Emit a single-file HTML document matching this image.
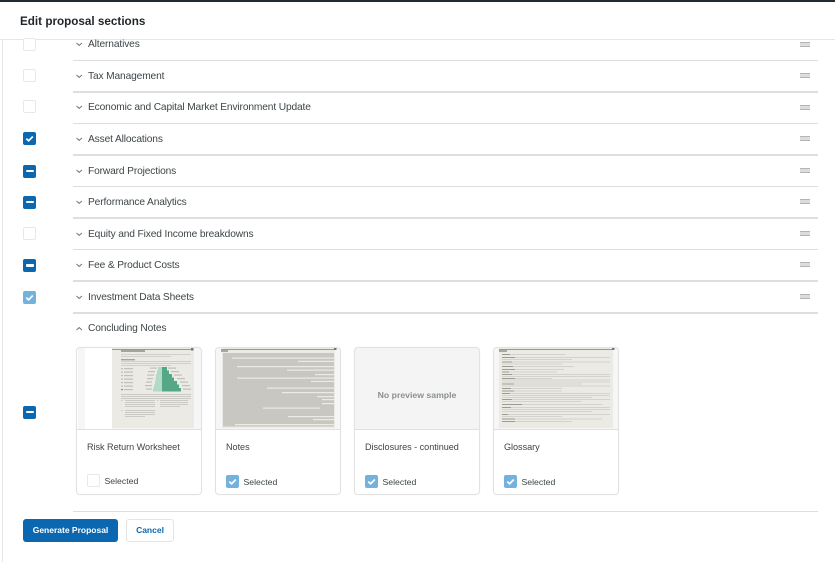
<!DOCTYPE html>
<html lang="en"><head><meta charset="utf-8"><title>Edit proposal sections</title>
<style>
html,body{margin:0;padding:0;background:#fff}
body{position:relative;width:835px;height:562px;overflow:hidden;font-family:"Liberation Sans",sans-serif;color:#3d4548;font-size:10.2px}
.a{position:absolute}
.t{position:absolute;left:88px;line-height:14px;white-space:nowrap;letter-spacing:-.13px}
.l{position:absolute;left:73px;width:745px;height:1.5px;background:#dedede}
.h{position:absolute;left:800px;width:10px;height:5px;border-top:1.5px solid #b4b4b4;border-bottom:1.5px solid #b4b4b4;box-sizing:border-box;background:#dcdcdc}
.c{position:absolute;left:23px;width:13px;height:13px;box-sizing:border-box;border-radius:2px}
.e{border:1.5px solid #e8e8e8;background:#fff}
.b{background:#0b68b0}
.p{background:#74b2de}
.c svg,.k svg{position:absolute;left:0;top:0}
.m::after{content:"";position:absolute;left:2.5px;top:5.2px;width:8px;height:2.6px;background:#fff;border-radius:1px}
.card{position:absolute;top:347px;width:126px;height:148px;box-sizing:border-box;border:1px solid #e2e2e2;border-radius:4px;box-shadow:0 0 1px rgba(0,0,0,.08)}
.div{position:absolute;left:0;right:0;top:81px;height:1px;background:#e0e0e0}
.n{position:absolute;left:10px;top:92.500px;line-height:13px;white-space:nowrap;font-size:9.100px;letter-spacing:-.03px}
.s{position:absolute;left:27.500px;top:127.500px;line-height:13px;font-size:8.700px;white-space:nowrap}
.k{position:absolute;left:10px;top:127px;width:13px;height:13px;box-sizing:border-box;border-radius:2px}
</style></head><body>
<div class="a" style="left:0;top:0;width:835px;height:2px;background:#252b33"></div>
<div class="a" style="left:20px;top:13.500px;font-size:11.700px;font-weight:700;line-height:16px;color:#1f2528;white-space:nowrap">Edit proposal sections</div>
<div class="a" style="left:0;top:39px;width:835px;height:1px;background:#e6e6e6"></div>
<div class="a" style="left:2px;top:40px;width:1px;height:522px;background:#e6e6e6"></div>

<svg class="a" style="left:0;top:0" width="835" height="562" viewBox="0 0 835 562">
<defs>
<filter id="bl" x="0" y="0" width="100%" height="100%"><feGaussianBlur stdDeviation=".35"/></filter>
</defs>
<g fill="none" stroke="#777" stroke-width="1">
<path d="M76.5 43l2.700 2.400 2.700-2.400"/><path d="M76.5 75l2.700 2.400 2.700-2.400"/><path d="M76.5 106l2.700 2.400 2.700-2.400"/><path d="M76.5 138l2.700 2.400 2.700-2.400"/><path d="M76.5 170l2.700 2.400 2.700-2.400"/><path d="M76.5 201l2.700 2.400 2.700-2.400"/><path d="M76.5 233l2.700 2.400 2.700-2.400"/><path d="M76.5 264l2.700 2.400 2.700-2.400"/><path d="M76.5 296l2.700 2.400 2.700-2.400"/><path d="M76.5 330l2.700-2.400 2.700 2.400"/>
</g>
<!-- Risk thumb -->
<rect x="78" y="348" width="123" height="81" fill="#f6f6f6"/>
<rect x="85" y="348" width="27" height="81" fill="#fff"/>
<rect x="112" y="348" width="82" height="80" fill="#eceae4"/>
<g filter="url(#bl)">
<rect x="112" y="349" width="81" height=".7" fill="#777"/>
<rect x="191" y="348" width="2.500" height="2.500" fill="#777"/>
<rect x="121" y="350" width="24" height="2" fill="#a5a49f"/>
<g fill="#d0cfc9">
<rect x="121" y="354" width="70" height="1"/><rect x="121" y="356" width="50" height="1"/>
<rect x="121" y="359" width="14" height="1.400" fill="#a5a49f"/>
<rect x="121" y="361" width="70" height="1"/><rect x="121" y="363" width="70" height="1"/><rect x="121" y="365" width="50" height="1"/>
</g>
<g fill="#c0bfb9">
<rect x="121" y="368" width="2" height="1.200"/><rect x="124" y="368" width="9" height="1.200"/><rect x="150" y="367.500" width="7" height="1.200"/>
<rect x="121" y="371.500" width="2" height="1.200"/><rect x="124" y="371.500" width="9" height="1.200"/><rect x="148" y="371" width="7" height="1.200"/>
<rect x="121" y="375" width="2" height="1.200"/><rect x="124" y="375" width="9" height="1.200"/><rect x="147" y="374.500" width="7" height="1.200"/>
<rect x="121" y="378.500" width="2" height="1.200"/><rect x="124" y="378.500" width="9" height="1.200"/><rect x="147" y="378" width="6" height="1.200"/>
<rect x="121" y="382" width="2" height="1.200"/><rect x="124" y="382" width="9" height="1.200"/><rect x="146" y="381.500" width="6" height="1.200"/>
<rect x="121" y="385.500" width="2" height="1.200"/><rect x="124" y="385.500" width="9" height="1.200"/><rect x="145" y="385" width="7" height="1.200"/>
<rect x="121" y="389" width="2" height="1.200" fill="#888"/><rect x="124" y="389" width="9" height="1.200"/><rect x="146" y="388.500" width="6" height="1.200"/>
<rect x="168" y="367.500" width="8" height="1.200"/><rect x="171" y="371" width="8" height="1.200"/><rect x="174" y="374.500" width="8" height="1.200"/><rect x="177" y="378" width="8" height="1.200"/><rect x="180" y="381.500" width="8" height="1.200"/><rect x="182" y="385" width="8" height="1.200"/><rect x="183" y="388.500" width="8" height="1.200"/>
</g>
<g fill="#b3d9c7">
<rect x="158" y="367" width="4" height="3.500"/><rect x="157" y="370.500" width="5" height="3.500"/><rect x="156" y="374" width="6" height="3.500"/><rect x="155.500" y="377.500" width="6.500" height="3.500"/><rect x="155" y="381" width="7" height="3.500"/><rect x="154" y="384.500" width="8" height="3.500"/><rect x="153" y="388" width="9" height="3.500"/>
</g>
<g fill="#55a885">
<rect x="162" y="367" width="5" height="3.500"/><rect x="162" y="370.500" width="7" height="3.500"/><rect x="162" y="374" width="10" height="3.500"/><rect x="162" y="377.500" width="12" height="3.500"/><rect x="162" y="381" width="15" height="3.500"/><rect x="162" y="384.500" width="17" height="3.500"/><rect x="162" y="388" width="19" height="3.500"/>
</g>
<g fill="#cbcac4">
<rect x="121" y="394" width="70" height="1"/><rect x="121" y="396" width="70" height="1"/><rect x="121" y="398" width="70" height="1"/>
<rect x="121" y="400" width="1.500" height="1"/><rect x="125" y="400" width="30" height="1"/><rect x="125" y="402" width="30" height="1"/><rect x="125" y="404" width="30" height="1"/><rect x="125" y="406" width="30" height="1"/>
<rect x="121" y="410" width="1.500" height="1"/><rect x="125" y="410" width="30" height="1"/><rect x="125" y="412" width="30" height="1"/><rect x="125" y="414" width="30" height="1"/><rect x="125" y="416" width="20" height="1"/>
<rect x="157" y="400" width="1.500" height="1"/><rect x="160" y="400" width="28" height="1"/><rect x="160" y="402" width="28" height="1"/><rect x="160" y="404" width="28" height="1"/><rect x="160" y="406" width="20" height="1"/>
</g>
</g>
<!-- Notes thumb -->
<rect x="216" y="348" width="124" height="81" fill="#f6f6f6"/>
<rect x="222" y="348" width="113" height="80" fill="#eceae4"/>
<g filter="url(#bl)">
<rect x="221" y="349" width="114" height=".7" fill="#777"/>
<rect x="334" y="347.500" width="2.500" height="2.500" fill="#777"/>
<rect x="221" y="350" width="7" height="2" fill="#a8a7a2"/>
<rect x="223" y="353" width="111" height="73.500" fill="#c8c7c1"/>
<g fill="#eceae4">
<rect x="232" y="357.500" width="102" height="1.200"/><rect x="298" y="360.800" width="36" height="1.200"/><rect x="237" y="366" width="97" height="1.200"/><rect x="287" y="369.500" width="47" height="1.200"/><rect x="315" y="374" width="19" height="1.200"/><rect x="237" y="377.500" width="97" height="1.200"/><rect x="311" y="380.800" width="23" height="1.200"/><rect x="267" y="387.500" width="67" height="1.200"/><rect x="282" y="392" width="52" height="1.200"/><rect x="317" y="396" width="17" height="1.200"/><rect x="322" y="399" width="12" height="1.200"/><rect x="322" y="403" width="12" height="1.200"/><rect x="263" y="407.500" width="57" height="1.200"/><rect x="288" y="416" width="46" height="1.200"/><rect x="313" y="419" width="21" height="1.200"/><rect x="235" y="424" width="99" height="1.200"/>
</g>
</g>
<!-- Disclosures thumb -->
<rect x="355" y="348" width="124" height="81" fill="#f4f4f4"/>
<!-- Glossary thumb -->
<rect x="494" y="348" width="124" height="81" fill="#f6f6f6"/>
<rect x="499" y="348" width="114" height="80" fill="#eceae4"/>
<g filter="url(#bl)">
<rect x="499" y="349" width="114" height=".7" fill="#777"/>
<rect x="612" y="347.500" width="2.500" height="2.500" fill="#777"/>
<rect x="499" y="350" width="8" height="2" fill="#a8a7a2"/>
<g fill="#d3d2cc">
<rect x="502" y="354" width="64" height="1"/><rect x="502" y="357" width="108" height="1"/><rect x="502" y="359" width="70" height="1"/><rect x="502" y="361.500" width="108" height="1"/><rect x="502" y="363.500" width="60" height="1"/><rect x="502" y="366" width="72" height="1"/><rect x="502" y="369" width="62" height="1"/><rect x="502" y="371.500" width="55" height="1"/><rect x="502" y="374" width="108" height="1"/><rect x="502" y="376" width="108" height="1"/><rect x="502" y="378" width="50" height="1"/><rect x="502" y="379.500" width="108" height="1"/><rect x="502" y="381.500" width="108" height="1"/><rect x="502" y="383.500" width="80" height="1"/><rect x="502" y="385.500" width="108" height="1"/><rect x="502" y="388" width="60" height="1"/><rect x="502" y="390.500" width="60" height="1"/><rect x="502" y="393" width="108" height="1"/><rect x="502" y="395" width="108" height="1"/><rect x="502" y="397" width="90" height="1"/><rect x="502" y="399" width="108" height="1"/><rect x="502" y="401" width="80" height="1"/><rect x="502" y="404" width="100" height="1"/><rect x="502" y="407" width="108" height="1"/><rect x="502" y="409" width="108" height="1"/><rect x="502" y="411" width="90" height="1"/><rect x="502" y="414" width="108" height="1"/><rect x="502" y="416" width="60" height="1"/><rect x="502" y="418.500" width="100" height="1"/><rect x="502" y="421" width="70" height="1"/>
</g>
<g fill="#9c9b96">
<rect x="502" y="354" width="8" height="1"/><rect x="502" y="357" width="13" height="1"/><rect x="502" y="361.500" width="10" height="1"/><rect x="502" y="366" width="11" height="1"/><rect x="502" y="369" width="13" height="1"/><rect x="502" y="371.500" width="7" height="1"/><rect x="502" y="374" width="10" height="1"/><rect x="502" y="378" width="13" height="1"/><rect x="502" y="383.500" width="12" height="1"/><rect x="502" y="388" width="9" height="1"/><rect x="502" y="390.500" width="12" height="1"/><rect x="502" y="393" width="8" height="1"/><rect x="502" y="399" width="10" height="1"/><rect x="502" y="404" width="20" height="1"/><rect x="502" y="407" width="9" height="1"/><rect x="502" y="414" width="6" height="1"/><rect x="502" y="418.500" width="13" height="1"/><rect x="502" y="421" width="13" height="1"/>
</g>
</g>
</svg>

<div class="t" style="top:38px">Alternatives</div><div class="l" style="top:59.500px"></div><div class="h" style="top:41.500px"></div>
<div class="t" style="top:70px">Tax Management</div><div class="l" style="top:91px"></div><div class="h" style="top:73px"></div>
<div class="t" style="top:101px">Economic and Capital Market Environment Update</div><div class="l" style="top:122.500px"></div><div class="h" style="top:104.500px"></div>
<div class="t" style="top:133px">Asset Allocations</div><div class="l" style="top:154px"></div><div class="h" style="top:136px"></div>
<div class="t" style="top:165px">Forward Projections</div><div class="l" style="top:185.500px"></div><div class="h" style="top:167.500px"></div>
<div class="t" style="top:196px">Performance Analytics</div><div class="l" style="top:217px"></div><div class="h" style="top:199px"></div>
<div class="t" style="top:228px">Equity and Fixed Income breakdowns</div><div class="l" style="top:248.500px"></div><div class="h" style="top:230.500px"></div>
<div class="t" style="top:259px">Fee &amp; Product Costs</div><div class="l" style="top:280px"></div><div class="h" style="top:262px"></div>
<div class="t" style="top:291px">Investment Data Sheets</div><div class="l" style="top:312px"></div><div class="h" style="top:293.500px"></div>
<div class="t" style="top:322px">Concluding Notes</div>
<div class="l" style="top:510.500px"></div>

<div class="c e" style="top:38px"></div>
<div class="c e" style="top:69px"></div>
<div class="c e" style="top:100px"></div>
<div class="c b" style="top:132px"><svg width="13" height="13"><path d="M3.300 6.600l2.300 2.200 4.200-4.300" fill="none" stroke="#fff" stroke-width="1.700"/></svg></div>
<div class="c b m" style="top:164.500px"></div>
<div class="c b m" style="top:195.500px"></div>
<div class="c e" style="top:226.500px"></div>
<div class="c b m" style="top:259px"></div>
<div class="c p" style="top:290.500px"><svg width="13" height="13"><path d="M3.300 6.600l2.300 2.200 4.200-4.300" fill="none" stroke="#fff" stroke-width="1.700"/></svg></div>
<div class="c b m" style="top:405.500px"></div>

<div class="card" style="left:76px"><div class="div"></div><div class="n">Risk Return Worksheet</div><div class="k e" style="top:126px"></div><div class="s" style="top:126.500px">Selected</div></div>
<div class="card" style="left:215px"><div class="div"></div><div class="n">Notes</div><div class="k p"><svg width="13" height="13"><path d="M3.300 6.600l2.300 2.200 4.200-4.300" fill="none" stroke="#fff" stroke-width="1.700"/></svg></div><div class="s">Selected</div></div>
<div class="card" style="left:354px"><div class="div"></div><div class="a" style="left:0;right:0;top:41px;text-align:center;font-size:8.700px;font-weight:700;line-height:13px;color:#8a8f92">No preview sample</div><div class="n">Disclosures - continued</div><div class="k p"><svg width="13" height="13"><path d="M3.300 6.600l2.300 2.200 4.200-4.300" fill="none" stroke="#fff" stroke-width="1.700"/></svg></div><div class="s">Selected</div></div>
<div class="card" style="left:493px"><div class="div"></div><div class="n">Glossary</div><div class="k p"><svg width="13" height="13"><path d="M3.300 6.600l2.300 2.200 4.200-4.300" fill="none" stroke="#fff" stroke-width="1.700"/></svg></div><div class="s">Selected</div></div>

<div class="a" style="left:23px;top:519px;width:95px;height:23px;background:#0b68b0;border-radius:3px;color:#fff;font-weight:700;font-size:8.500px;line-height:23px;text-align:center;white-space:nowrap">Generate Proposal</div>
<div class="a" style="left:126px;top:519px;width:48px;height:23px;box-sizing:border-box;border:1px solid #e4e4e4;border-radius:3px;color:#0b68b0;font-weight:700;font-size:8.500px;line-height:21px;text-align:center">Cancel</div>
</body></html>
